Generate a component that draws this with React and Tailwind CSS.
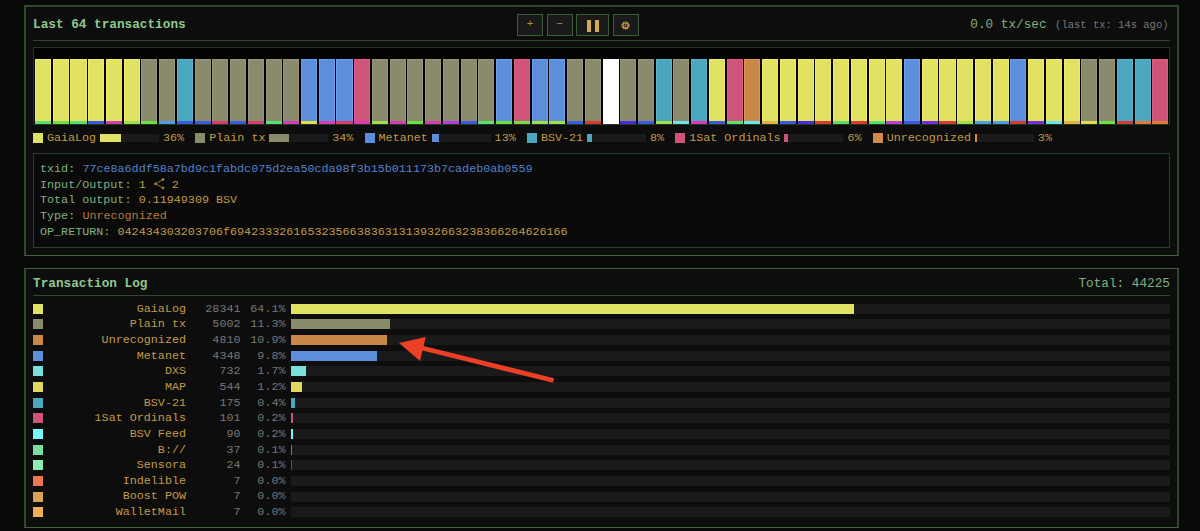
import clsx from 'clsx';

const TYPES = {
  G: 'bg-[#e1e163] border-[#f0ee68]',
  P: 'bg-[#8a8a6c] border-[#97967a]',
  B: 'bg-[#4ba7be] border-[#56b6cc]',
  M: 'bg-[#5d8edb] border-[#6a9ff0]',
  O: 'bg-[#d05478] border-[#e05c85]',
  U: 'bg-[#c98748] border-[#dc9450]',
  W: 'bg-white border-white',
};

const STRIPES = {
  green: 'bg-[#5ce06c]',
  grass: 'bg-[#6fe044]',
  blue: 'bg-[#3b5be0]',
  pink: 'bg-[#d63cb6]',
  lime: 'bg-[#a0e04a]',
  sky: 'bg-[#4a9de6]',
  rose: 'bg-[#d63c70]',
  yellow: 'bg-[#dde04a]',
  purple: 'bg-[#b93ce0]',
  red: 'bg-[#d63c36]',
  indigo: 'bg-[#4a2ce0]',
  violet: 'bg-[#7a2ce0]',
  cyan: 'bg-[#6be4ec]',
  amber: 'bg-[#e0b04a]',
  orange: 'bg-[#dc7a38]',
  white: 'bg-white',
};

const txTypes = 'GGGGGGPPBPPPPPPMMMOPPPPPPPMOMMPPWPPBPBGOUGGGGGGGGMGGGGGMGGGPPBBO';

const txStripes = [
  'green', 'grass', 'green', 'blue', 'pink', 'lime', 'grass', 'sky',
  'blue', 'blue', 'rose', 'blue', 'rose', 'green', 'pink', 'yellow',
  'pink', 'rose', 'pink', 'lime', 'pink', 'grass', 'pink', 'purple',
  'blue', 'green', 'grass', 'grass', 'lime', 'lime', 'blue', 'red',
  'white', 'indigo', 'blue', 'lime', 'cyan', 'pink', 'blue', 'green',
  'cyan', 'amber', 'blue', 'indigo', 'red', 'green', 'red', 'green',
  'purple', 'blue', 'violet', 'red', 'lime', 'sky', 'sky', 'red',
  'violet', 'cyan', 'amber', 'yellow', 'grass', 'red', 'orange', 'orange',
];

const legend = [
  { name: 'GaiaLog', pct: 36, color: 'bg-[#e1e163]' },
  { name: 'Plain tx', pct: 34, color: 'bg-[#8a8a6c]' },
  { name: 'Metanet', pct: 13, color: 'bg-[#5d8edb]' },
  { name: 'BSV-21', pct: 8, color: 'bg-[#4ba7be]' },
  { name: '1Sat Ordinals', pct: 6, color: 'bg-[#d05478]' },
  { name: 'Unrecognized', pct: 3, color: 'bg-[#d08b4a]' },
];

const log = [
  { name: 'GaiaLog', count: 28341, pct: '64.1', color: 'bg-[#e1e163]' },
  { name: 'Plain tx', count: 5002, pct: '11.3', color: 'bg-[#8a8a6c]' },
  { name: 'Unrecognized', count: 4810, pct: '10.9', color: 'bg-[#c98748]' },
  { name: 'Metanet', count: 4348, pct: '9.8', color: 'bg-[#5d8edb]' },
  { name: 'DXS', count: 732, pct: '1.7', color: 'bg-[#7ae0de]' },
  { name: 'MAP', count: 544, pct: '1.2', color: 'bg-[#e0d662]' },
  { name: 'BSV-21', count: 175, pct: '0.4', color: 'bg-[#4ba7be]' },
  { name: '1Sat Ordinals', count: 101, pct: '0.2', color: 'bg-[#d05478]' },
  { name: 'BSV Feed', count: 90, pct: '0.2', color: 'bg-[#76fbfd]' },
  { name: 'B://', count: 37, pct: '0.1', color: 'bg-[#78dfa0]', fade: 'opacity-60' },
  { name: 'Sensora', count: 24, pct: '0.1', color: 'bg-[#8bedb3]', fade: 'opacity-35' },
  { name: 'Indelible', count: 7, pct: '0.0', color: 'bg-[#ee7950]' },
  { name: 'Boost POW', count: 7, pct: '0.0', color: 'bg-[#d8a155]' },
  { name: 'WalletMail', count: 7, pct: '0.0', color: 'bg-[#f3ab55]' },
];

const ControlButton = ({ label, className, children }) => (
  <button
    aria-label={label}
    className={clsx('flex h-[22px] items-center justify-center border border-[#3a5c38] bg-[#1a1a1a] text-[#b08f48]', className)}
  >
    {children}
  </button>
);

const Controls = () => (
  <div className="flex gap-[3.6px]">
    <ControlButton label="Zoom in" className="w-[26px] text-[11px]">+</ControlButton>
    <ControlButton label="Zoom out" className="w-[26px] text-[11px]">−</ControlButton>
    <ControlButton label="Pause" className="w-[33px] gap-1 pt-px">
      <span className="h-3 w-1 bg-[#d4a94f]" />
      <span className="h-3 w-1 bg-[#d4a94f]" />
    </ControlButton>
    <ControlButton label="Settings" className="w-[26px]">
      <svg width="9" height="9" viewBox="0 0 10 10" fill="none" stroke="#c9a04c">
        <circle cx="5" cy="5" r="3" strokeWidth="1.5" />
        <circle cx="5" cy="5" r="4.2" strokeWidth="1.1" strokeDasharray="1.6 1.04" />
        <circle cx="5" cy="5" r="0.9" strokeWidth="0.8" />
      </svg>
    </ControlButton>
  </div>
);

const TxBar = ({ type, stripe }) => (
  <div className="flex h-[65px] flex-1 flex-col">
    <div className={clsx('flex-1 border border-b-0', TYPES[type])} />
    <div className={clsx('h-[3px]', STRIPES[stripe])} />
  </div>
);

const LegendItem = ({ name, pct, color }) => (
  <div className="flex items-center gap-[3.9px]">
    <div className={clsx('size-[10px]', color)} />
    <span className="pt-0.5">{name}</span>
    <div className="h-2 w-[59px] bg-[#1a1a1a]">
      <div className={clsx('h-full', color)} style={{ width: `${pct}%` }} />
    </div>
    <span className="pt-0.5">{pct}%</span>
  </div>
);

const Detail = ({ label, children }) => (
  <div className="flex gap-[7.2px]">
    <span className="text-[#7fb27f]">{label}:</span>
    {children}
  </div>
);

const LogRow = ({ name, count, pct, color, fade }) => (
  <div className="flex h-[15.65px] items-center">
    <div className={clsx('size-[10px]', color)} />
    <span className="w-[143px] pt-[1.5px] text-right text-[#c39a48]">{name}</span>
    <span className="w-[54.5px] pt-[1.5px] text-right text-[#777]">{count}</span>
    <span className="w-[45px] pt-[1.5px] text-right text-[#777]">{pct}%</span>
    <div className="ml-[5.5px] h-[10px] flex-1 bg-[#1a1a1a]">
      <div className={clsx('h-full', color, fade)} style={{ width: `${pct}%` }} />
    </div>
  </div>
);

const Arrow = () => (
  <svg className="absolute left-[398px] top-[334px]" width="160" height="52" viewBox="0 0 160 52">
    <path d="M22 13.5 L155.5 46.5" stroke="#eb4025" strokeWidth="4.8" />
    <path d="M1 9 L27.7 3 L22 27 Z" fill="#eb4025" />
  </svg>
);

const App = () => {
  return (
    <div className="relative flex h-[531px] w-[1200px] flex-col gap-3 overflow-hidden bg-[#090909] pl-6 pt-[5px] font-['Liberation_Mono',monospace] text-[11.73px] leading-[15.65px] whitespace-nowrap">
      <section className="flex h-[251px] w-[1155px] flex-col border-x-2 border-b border-t-2 border-[#2f492d] border-b-[#3f633c] bg-[#0d0d0d] px-[7px]">
        <header className="flex h-[34px] shrink-0 items-center justify-between border-b border-[#2f492d] pt-[3px] text-[12.72px]">
          <h2 className="font-bold text-[#8fc98f]">Last 64 transactions</h2>
          <Controls />
          <div className="flex items-center gap-[8.5px] text-[#7fb27f]">
            0.0 tx/sec
            <span className="pr-[1.5px] pt-px text-[10.5px] text-[#777]">(last tx: 14s ago)</span>
          </div>
        </header>
        <div className="mt-[6px] flex h-[78px] shrink-0 items-end gap-[1.7px] border border-[#233722] bg-[#020202] px-px">
          {txStripes.map((stripe, i) => (
            <TxBar key={i} type={txTypes[i]} stripe={stripe} />
          ))}
        </div>
        <div className="mt-[4px] flex h-[17px] shrink-0 gap-[11.3px] text-[#c39a48]">
          {legend.map((item) => (
            <LegendItem key={item.name} {...item} />
          ))}
        </div>
        <div className="mt-[7px] h-[95px] shrink-0 border border-[#2a4028] bg-[#0a0a0a] px-1.5 pt-[8px] text-[#c39a48]">
          <Detail label="txid">
            <span className="text-[#5583cc]">77ce8a6ddf58a7bd9c1fabdc075d2ea50cda98f3b15b011173b7cadeb0ab0559</span>
          </Detail>
          <Detail label="Input/Output">
            <span className="flex gap-[7px]">
              1
              <svg className="-mt-0.5" width="12" height="15" viewBox="0 0 12 15" fill="#a08040" stroke="#a08040">
                <path d="M10 3.5 L2.5 7.8 L10 12" fill="none" strokeWidth="0.9" />
                <circle cx="10" cy="3.5" r="1" />
                <circle cx="2.5" cy="7.8" r="1" />
                <circle cx="10" cy="12" r="1" />
              </svg>
              2
            </span>
          </Detail>
          <Detail label="Total output">
            <span>0.11949309 BSV</span>
          </Detail>
          <Detail label="Type">
            <span className="text-[#b87840]">Unrecognized</span>
          </Detail>
          <Detail label="OP_RETURN">
            <span>042434303203706f694233326165323566383631313932663238366264626166</span>
          </Detail>
        </div>
      </section>
      <section className="h-[260px] w-[1155px] shrink-0 border-x-2 border-y border-x-[#2f492d] border-y-[#3f633c] bg-[#0d0d0d] px-[7px]">
        <header className="flex h-[27px] items-center justify-between border-b border-[#2f492d] pt-[3px] text-[12.72px]">
          <h2 className="font-bold text-[#8fc98f]">Transaction Log</h2>
          <span className="text-[#7fb27f]">Total: 44225</span>
        </header>
        <div className="pt-[5px]">
          {log.map((row) => (
            <LogRow key={row.name} {...row} />
          ))}
        </div>
      </section>
      <Arrow />
    </div>
  );
};

export default App;
